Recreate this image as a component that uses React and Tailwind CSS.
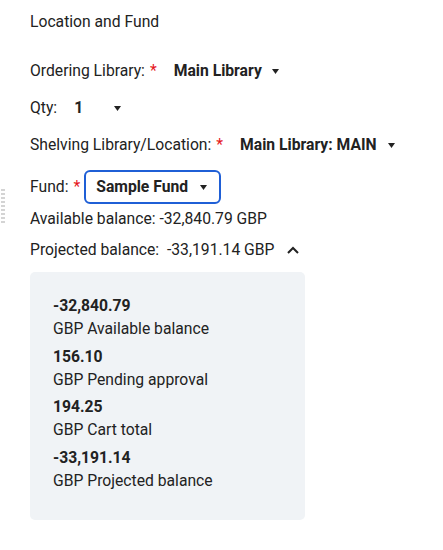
import React from 'react';

const Caret = () => (
    <svg width="7" height="5" viewBox="0 0 7 5" className="inline-block">
        <path d="M0 0 L7 0 L3.5 5 Z" fill="#222" />
    </svg>
);

const breakdown = [
    { amount: '-32,840.79', label: 'GBP Available balance' },
    { amount: '156.10', label: 'GBP Pending approval' },
    { amount: '194.25', label: 'GBP Cart total' },
    { amount: '-33,191.14', label: 'GBP Projected balance' },
];

const App = () => {
    return (
        <div className="relative w-[443px] h-[550px] bg-white text-[#222] text-[15.7px] font-['Roboto',sans-serif]">
            {/* drag handle */}
            <div className="absolute left-[1px] top-[189px] w-[4px] h-[34px] bg-[repeating-linear-gradient(#d4d4d4_0_2px,transparent_2px_4px)]" />

            <div className="pl-[30px] pt-[12px]">
                <div className="h-[20px] leading-[20px]">Location and Fund</div>

                <div className="mt-[29px] flex items-center h-[20px]">
                    <span>Ordering Library:</span>
                    <span className="text-[#e5161b] ml-[5px]">*</span>
                    <span className="font-bold ml-[17px]">Main Library</span>
                    <span className="ml-[10px] flex"><Caret /></span>
                </div>

                <div className="mt-[17px] flex items-center h-[20px]">
                    <span>Qty:</span>
                    <span className="font-bold ml-[17px]">1</span>
                    <span className="ml-[31px] flex"><Caret /></span>
                </div>

                <div className="mt-[17px] flex items-center h-[20px]">
                    <span>Shelving Library/Location:</span>
                    <span className="text-[#e5161b] ml-[5px]">*</span>
                    <span className="font-bold ml-[17px]">Main Library: MAIN</span>
                    <span className="ml-[11px] flex"><Caret /></span>
                </div>

                <div className="mt-[15px] flex items-center">
                    <span>Fund:</span>
                    <span className="text-[#e5161b] ml-[5px]">*</span>
                    <div className="ml-[4px] w-[137px] h-[34px] border-2 border-[#1f5fd6] rounded-[6px] flex items-center pl-[10px]">
                        <span className="font-bold">Sample Fund</span>
                        <span className="ml-[12px] flex"><Caret /></span>
                    </div>
                </div>

                <div className="mt-[5px] h-[20px] leading-[20px]">Available balance: -32,840.79 GBP</div>

                <div className="mt-[11px] flex items-center h-[20px]">
                    <span>Projected balance:&nbsp; -33,191.14 GBP</span>
                    <svg width="14" height="10" viewBox="0 0 14 10" className="ml-[12px]">
                        <path d="M2 8 L7 3 L12 8" stroke="#222" strokeWidth="2" fill="none" />
                    </svg>
                </div>

                <div className="mt-[12px] w-[275px] h-[248px] bg-[#f0f3f6] rounded-[5px] pl-[23px] pt-[23px]">
                    {breakdown.map((row) => (
                        <div key={row.label} className="mb-[5.7px]">
                            <div className="font-bold h-[22px] leading-[22px]">{row.amount}</div>
                            <div className="h-[23px] leading-[23px]">{row.label}</div>
                        </div>
                    ))}
                </div>
            </div>
        </div>
    );
};

export default App;
